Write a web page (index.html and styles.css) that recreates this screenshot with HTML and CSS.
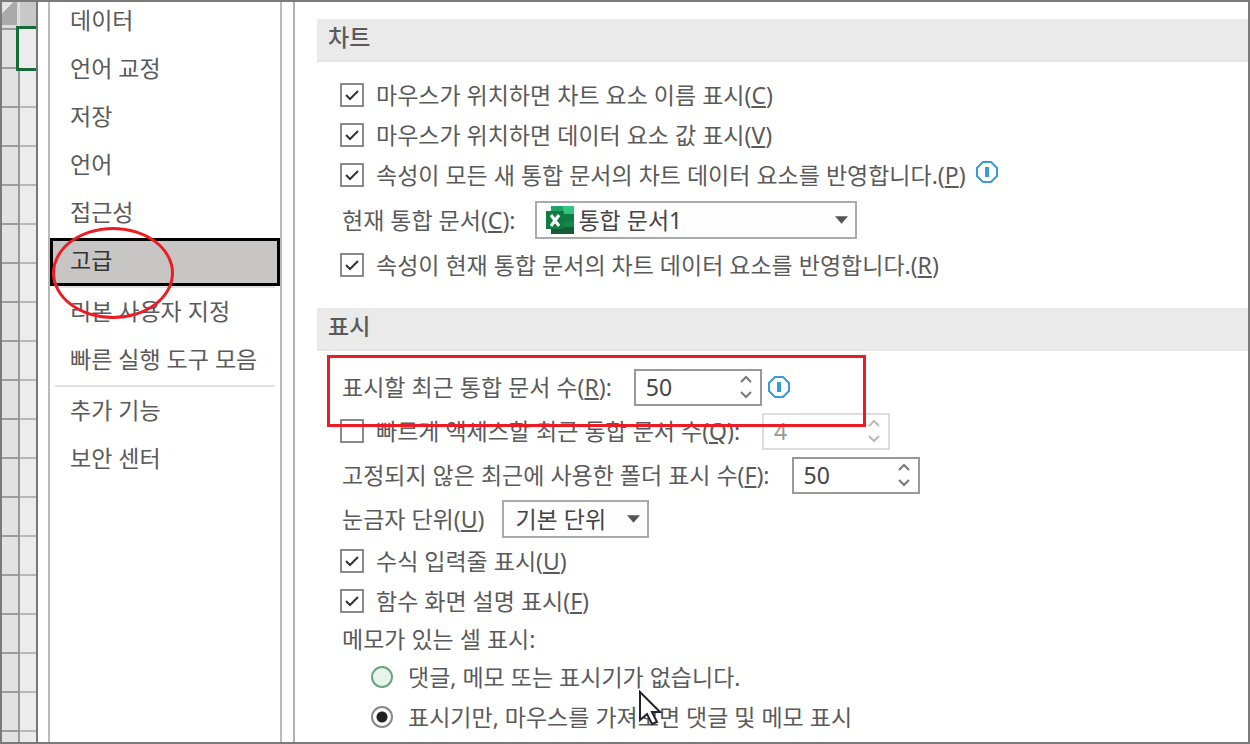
FILE: index.html
```html
<!DOCTYPE html>
<html lang="ko">
<head>
    <meta charset="UTF-8">
    <meta name="viewport" content="width=device-width, initial-scale=1.0">
    <title>Excel 옵션</title>
    <link rel="stylesheet" href="styles.css">
</head>
<body>
    <div class="window">
        <div class="sheet">
            <div class="corner"></div>
            <div class="row-heads"></div>
            <div class="cells"></div>
            <div class="active-cell"></div>
        </div>

        <nav class="menu">
            <a href="#">데이터</a>
            <a href="#">언어 교정</a>
            <a href="#">저장</a>
            <a href="#">언어</a>
            <a href="#">접근성</a>
            <a href="#" class="selected">고급</a>
            <hr>
            <a href="#">리본 사용자 지정</a>
            <a href="#">빠른 실행 도구 모음</a>
            <hr>
            <a href="#">추가 기능</a>
            <a href="#">보안 센터</a>
        </nav>

        <main class="options">
            <h2>차트</h2>
            <section class="chart">
                <div class="row">
                    <input type="checkbox" id="chartName" checked>
                    <label for="chartName">마우스가 위치하면 차트 요소 이름 표시(<u>C</u>)</label>
                </div>
                <div class="row">
                    <input type="checkbox" id="chartValue" checked>
                    <label for="chartValue">마우스가 위치하면 데이터 요소 값 표시(<u>V</u>)</label>
                </div>
                <div class="row">
                    <input type="checkbox" id="allBooks" checked>
                    <label for="allBooks">속성이 모든 새 통합 문서의 차트 데이터 요소를 반영합니다.(<u>P</u>)</label>
                    <svg class="info raised" viewBox="0 0 22 22"><path d="M7 1h8l6 6v8l-6 6H7l-6-6V7z"/><path class="bar" d="M11 6v10"/></svg>
                </div>
                <div class="row book">
                    <label for="book">현재 통합 문서(<u>C</u>):</label>
                    <div class="select wide">
                        <svg class="excel" viewBox="0 0 28 28">
                            <path fill="#21a366" d="M5 0h13v7H5z"/>
                            <path fill="#33c481" d="M17 0h11v8H17z"/>
                            <path fill="#107c41" d="M17 8h11v7H17z"/>
                            <path fill="#185c37" d="M5 7h12v14h11v7H5z"/>
                            <path fill="#21a366" d="M5 7h12v1H5z"/>
                            <path fill="#17864a" d="M17 15h11v6H17z"/>
                            <path fill="#107c41" d="M0 5h18v18H0z"/>
                            <path stroke="#fff" stroke-width="3" fill="none" d="M5 9l8 11M13 9L5 20"/>
                        </svg>
                        <select id="book"><option>통합 문서1</option></select>
                        <svg class="arrow" viewBox="0 0 14 8"><path d="M0 0h14L7 8z"/></svg>
                    </div>
                </div>
                <div class="row">
                    <input type="checkbox" id="thisBook" checked>
                    <label for="thisBook">속성이 현재 통합 문서의 차트 데이터 요소를 반영합니다.(<u>R</u>)</label>
                </div>
            </section>

            <h2>표시</h2>
            <section class="display">
                <div class="row field">
                    <label for="recent">표시할 최근 통합 문서 수(<u>R</u>):</label>
                    <div class="spin">
                        <input type="number" id="recent" value="50">
                        <svg viewBox="0 0 12 24"><path d="M1 7l5-5 5 5M1 17l5 5 5-5"/></svg>
                    </div>
                    <svg class="info" viewBox="0 0 22 22"><path d="M7 1h8l6 6v8l-6 6H7l-6-6V7z"/><path class="bar" d="M11 6v10"/></svg>
                </div>
                <div class="row field">
                    <input type="checkbox" id="quick">
                    <label for="quick">빠르게 액세스할 최근 통합 문서 수(<u>Q</u>):</label>
                    <div class="spin disabled">
                        <input type="number" aria-label="빠르게 액세스할 최근 통합 문서 수" value="4" disabled>
                        <svg viewBox="0 0 12 24"><path d="M1 7l5-5 5 5M1 17l5 5 5-5"/></svg>
                    </div>
                </div>
                <div class="row field">
                    <label for="folders">고정되지 않은 최근에 사용한 폴더 표시 수(<u>F</u>):</label>
                    <div class="spin">
                        <input type="number" id="folders" value="50">
                        <svg viewBox="0 0 12 24"><path d="M1 7l5-5 5 5M1 17l5 5 5-5"/></svg>
                    </div>
                </div>
                <div class="row field">
                    <label for="ruler">눈금자 단위(<u>U</u>)</label>
                    <div class="select unit">
                        <select id="ruler"><option>기본 단위</option></select>
                        <svg class="arrow" viewBox="0 0 14 8"><path d="M0 0h14L7 8z"/></svg>
                    </div>
                </div>
                <div class="row">
                    <input type="checkbox" id="formulaBar" checked>
                    <label for="formulaBar">수식 입력줄 표시(<u>U</u>)</label>
                </div>
                <div class="row">
                    <input type="checkbox" id="tips" checked>
                    <label for="tips">함수 화면 설명 표시(<u>F</u>)</label>
                </div>
                <div class="row caption">메모가 있는 셀 표시:</div>
                <div class="row radio">
                    <input type="radio" name="memo" id="memoNone" class="hover">
                    <label for="memoNone">댓글, 메모 또는 표시기가 없습니다.</label>
                </div>
                <div class="row radio">
                    <input type="radio" name="memo" id="memoMark" checked>
                    <label for="memoMark">표시기만, 마우스를 가져오면 댓글 및 메모 표시</label>
                </div>
                <div class="red-box"></div>
            </section>
        </main>

        <div class="red-circle"></div>
        <svg class="pointer" viewBox="0 0 24 36"><path d="M2 2v28l7-6 5 10 5-2-5-10h8z"/></svg>
    </div>
</body>
</html>
```
FILE: styles.css
```css
* { box-sizing: border-box; }
body { margin: 0; font-family: "Noto Sans", "Noto Sans CJK KR", sans-serif; font-size: 23px; line-height: 32px; color: #5a5a5a; background: #fff; }
input, select { font: inherit; color: inherit; margin: 0; }
.window { position: relative; display: flex; height: 100vh; overflow: hidden; border: 2px solid #7a7a7a; }

/* worksheet behind the dialog */
.sheet { position: relative; flex: none; width: 36px; display: grid; grid-template-columns: 18px 1fr; grid-template-rows: 26px 1fr; border-right: 2px solid #777; background: #c8c8c8; }
.corner { grid-row: 1; grid-column: 1; background: linear-gradient(135deg, #e4e4e4 30%, #aaa 31%); border-right: 3px solid #ddd; border-bottom: 3px solid #ddd; }
.row-heads { grid-row: 2; grid-column: 1; border-right: 2px solid #999; background: repeating-linear-gradient(#9c9c9c 0 2px, #e2e2e2 2px 39px); }
.cells { grid-row: 2; grid-column: 2; background: repeating-linear-gradient(#b8b8b8 0 2px, #ececec 2px 39px); }
.active-cell { position: absolute; left: 14px; top: 24px; width: 20px; height: 45px; border: 3px solid #156c38; border-right: 0; background: #ececec; }

.menu { flex: none; width: 234px; margin-left: 10px; padding: 0 1px; border: solid #b9b9b9; border-width: 0 2px; }
.menu a { display: block; height: 48px; padding: 6px 19px; color: inherit; text-decoration: none; white-space: nowrap; }
.menu a:first-child { margin-top: -4px; }
.menu a.selected { margin: 0 -1px; padding: 3px 17px; border: 3px solid #000; background: #c8c6c4; color: #333; }
.menu hr { height: 2px; margin: 0 4px 1px; border: 0; background: #e1e1e4; }

.options { flex: 1; min-width: 0; margin-left: 11px; padding: 17px 0 0 22px; border-left: 2px solid #b0b0b0; }
h2 { height: 43px; margin: 0; padding: 2px 11px; font-size: 23px; line-height: 32px; font-weight: 500; background: #eaeaea; border-bottom: 2px solid #e5e5e8; }
section { position: relative; padding-left: 23px; }
.chart { padding-top: 13px; padding-bottom: 23px; }
.display { padding-top: 14px; }
.row { display: flex; align-items: center; height: 40px; padding-left: 2px; white-space: nowrap; }
.row.book { height: 50px; gap: 20px; }
.row.field { height: 44px; }
.row.caption { height: 36px; }
.row.radio { padding-left: 33px; }

input[type=checkbox] { appearance: none; flex: none; width: 24px; height: 24px; margin: 0 12px 0 -2px; border: 2px solid #8a8a8a; background: #fff; }
input[type=checkbox]:checked { background: #fff url("data:image/svg+xml,%3Csvg xmlns='http://www.w3.org/2000/svg' viewBox='0 0 20 20'%3E%3Cpath d='M4 10l4 4 8-8' fill='none' stroke='%23333' stroke-width='2'/%3E%3C/svg%3E"); }
input[type=radio] { appearance: none; flex: none; width: 22px; height: 22px; margin-right: 15px; margin-left: -2px; border: 2px solid #888; border-radius: 50%; background: #fff; }
input[type=radio]:checked { background: radial-gradient(circle, #222 5px, #fff 6px); }
input[type=radio].hover { border-color: #6aa583; background: #e8f3ec; }

.select { position: relative; display: flex; align-items: center; height: 38px; border: 2px solid #aaa; background: #fdfdfd; color: #444; }
.select select { appearance: none; flex: 1; height: 34px; padding: 0; border: 0; background: none; }
.select.wide { width: 322px; padding-left: 9px; }
.select.unit { width: 147px; padding-left: 11px; margin-left: 18px; }
.arrow { position: absolute; right: 7px; width: 13px; height: 8px; fill: #555; pointer-events: none; }
.excel { width: 28px; height: 28px; margin-right: 4px; }

.spin { display: flex; align-items: center; width: 128px; height: 37px; margin-left: 22px; padding: 0 8px 0 10px; border: 2px solid #999; background: #fff; color: #444; }
.spin input { flex: 1; min-width: 0; height: 32px; padding: 0; border: 0; background: none; appearance: textfield; }
.spin svg { width: 12px; height: 24px; fill: none; stroke: #777; stroke-width: 2; }
.spin.disabled { border-color: #ddd; color: #999; }
.spin.disabled svg { stroke: #bbb; }
.info { flex: none; width: 22px; height: 22px; margin-left: 6px; fill: none; stroke: #3a9ad9; stroke-width: 2; }
.info .bar { stroke-width: 4; }
.info.raised { margin-left: 10px; margin-bottom: 6px; }

/* marks drawn over the dialog */
.red-box { position: absolute; left: 10px; top: 4px; width: 539px; height: 72px; border: 3px solid #ed1c24; }
.red-circle { position: absolute; left: 50px; top: 225px; width: 122px; height: 92px; border: 3px solid #ed1c24; border-radius: 50%; }
.pointer { position: absolute; left: 636px; top: 688px; width: 24px; height: 36px; fill: #fff; stroke: #223; stroke-width: 2; }
```
